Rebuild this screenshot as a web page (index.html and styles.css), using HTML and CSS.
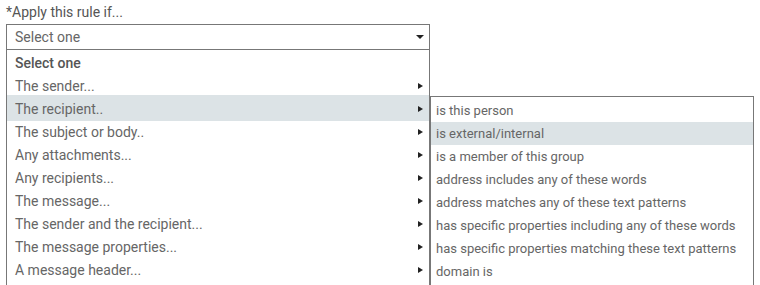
FILE: index.html
```html
<!DOCTYPE html>
<html lang="en">
<head>
    <meta charset="UTF-8">
    <title>Apply this rule if</title>
    <link rel="stylesheet" href="styles.css">
</head>
<body>
    <div class="field">
        <label class="label">*Apply this rule if...</label>
        <div class="select">
            <span>Select one</span>
            <span class="caret-down"></span>
        </div>
        <ul class="list">
            <li class="item heading">Select one</li>
            <li class="item">The sender...<span class="caret-right"></span></li>
            <li class="item active">The recipient..<span class="caret-right"></span>
                <ul class="submenu">
                    <li class="item">is this person</li>
                    <li class="item active">is external/internal</li>
                    <li class="item">is a member of this group</li>
                    <li class="item">address includes any of these words</li>
                    <li class="item">address matches any of these text patterns</li>
                    <li class="item">has specific properties including any of these words</li>
                    <li class="item">has specific properties matching these text patterns</li>
                    <li class="item">domain is</li>
                </ul>
            </li>
            <li class="item">The subject or body..<span class="caret-right"></span></li>
            <li class="item">Any attachments...<span class="caret-right"></span></li>
            <li class="item">Any recipients...<span class="caret-right"></span></li>
            <li class="item">The message...<span class="caret-right"></span></li>
            <li class="item">The sender and the recipient...<span class="caret-right"></span></li>
            <li class="item">The message properties...<span class="caret-right"></span></li>
            <li class="item">A message header...<span class="caret-right"></span></li>
        </ul>
    </div>
</body>
</html>
```

FILE: styles.css
```css
html, body {
    overflow: hidden;
}

body {
    margin: 0;
    padding: 2px 6px 0;
    font-family: Roboto, 'Liberation Sans', Arial, sans-serif;
    font-size: 14px;
    color: #666;
    background-color: #fff;
}

.field {
    width: 424px;
}

.label {
    display: block;
    line-height: 20px;
    margin-bottom: 2px;
    color: #555;
}

.select {
    display: flex;
    justify-content: space-between;
    align-items: center;
    height: 26px;
    box-sizing: border-box;
    padding: 0 5px 0 8px;
    border: 1px solid #777;
}

.caret-down {
    width: 0;
    height: 0;
    border-left: 4px solid transparent;
    border-right: 4px solid transparent;
    border-top: 4px solid #222;
}

.list {
    list-style: none;
    margin: 0;
    padding: 1px 0 20px;
    border-left: 1px solid #777;
    border-right: 1px solid #777;
}

.item {
    position: relative;
    display: flex;
    justify-content: space-between;
    align-items: center;
    height: 23px;
    padding: 0 6px 0 8px;
    white-space: nowrap;
}

.item.heading {
    color: #555;
    font-weight: 500;
}

.item.active {
    background-color: #dce3e6;
}

.list > .item.active {
    box-shadow: 0 -2px 0 #dce3e6, 0 1px 0 #dce3e6;
}

.caret-right {
    width: 0;
    height: 0;
    border-top: 3.5px solid transparent;
    border-bottom: 3.5px solid transparent;
    border-left: 5px solid #222;
}

.submenu {
    position: absolute;
    left: 100%;
    top: -1px;
    width: 324px;
    box-sizing: border-box;
    list-style: none;
    margin: 0 0 0 1px;
    padding: 2px 0 20px;
    border: 1px solid #777;
    border-bottom: none;
    background-color: #fff;
    font-size: 13px;
}

.submenu .item {
    padding: 0 5px;
}
```
